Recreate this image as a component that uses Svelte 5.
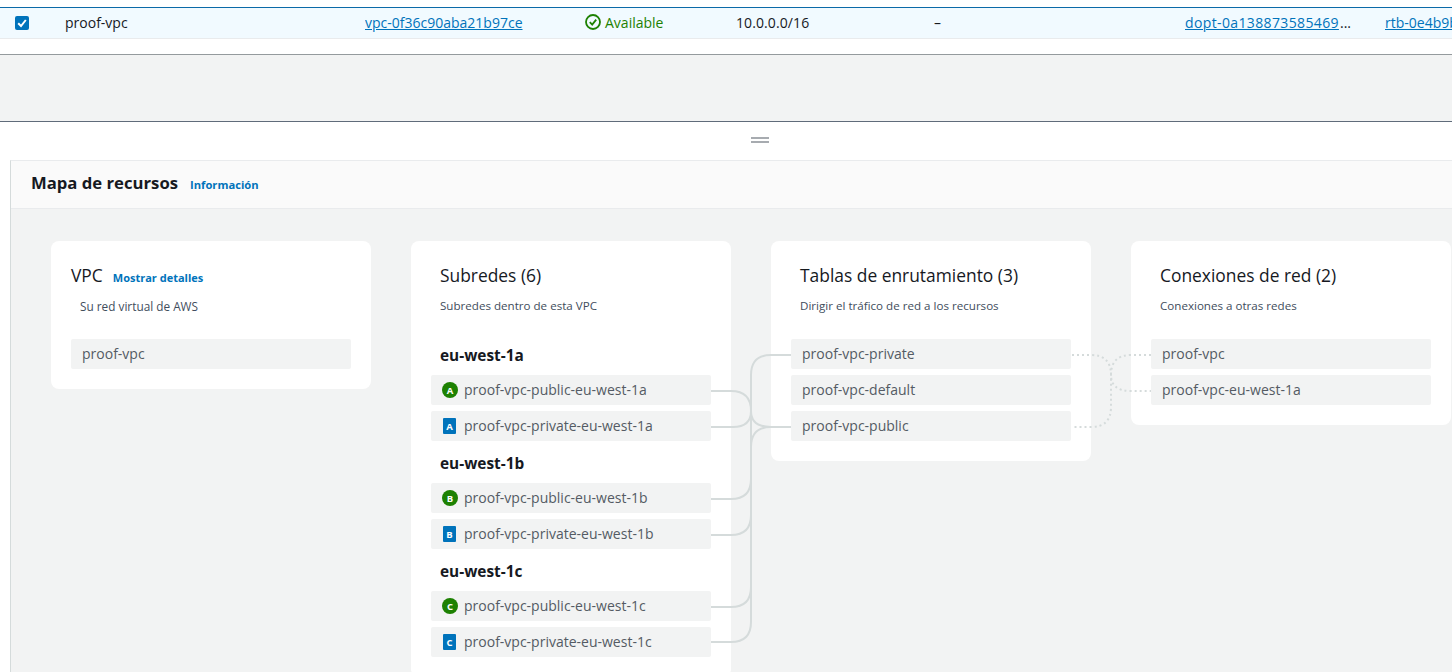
<script>
  const letters = ['a', 'b', 'c'];
  const regions = letters.map((l) => ({ name: `eu-west-1${l}`, letter: l.toUpperCase(), suffix: `eu-west-1${l}` }));
  const routes = ['proof-vpc-private', 'proof-vpc-default', 'proof-vpc-public'];
  const connections = ['proof-vpc', 'proof-vpc-eu-west-1a'];
</script>

<div class="page">
  <div class="top-gap"></div>
  <div class="row">
    <div class="cell check">
      <svg width="14" height="14" viewBox="0 0 14 14" aria-hidden="true">
        <rect width="14" height="14" rx="2" fill="#0073bb" />
        <path d="M3.2 7.2 6 10l4.8-6" fill="none" stroke="#fff" stroke-width="2" />
      </svg>
    </div>
    <div class="cell">proof-vpc</div>
    <div class="cell"><a href="#a">vpc-0f36c90aba21b97ce</a></div>
    <div class="cell status">
      <svg width="16" height="16" viewBox="0 0 16 16" aria-hidden="true">
        <circle cx="8" cy="8" r="7" fill="none" stroke="#1d8102" stroke-width="1.8" />
        <path d="M4.8 8.2 7.2 10.6 11.2 5.6" fill="none" stroke="#1d8102" stroke-width="1.8" />
      </svg>
      <span>Available</span>
    </div>
    <div class="cell cidr">10.0.0.0/16</div>
    <div class="cell dash">–</div>
    <div class="cell trunc"><a href="#b">dopt-0a138873585469</a><span>...</span></div>
    <div class="cell clip"><a href="#c">rtb-0e4b9bd27</a></div>
  </div>
  <div class="after-row"></div>
  <div class="band"></div>
  <div class="handle"><span></span></div>

  <section class="panel">
    <header class="panel-head">
      <h2>Mapa de recursos</h2>
      <a class="info" href="#i">Información</a>
    </header>
    <div class="map">
      <svg class="links" width="1441" height="463" viewBox="11 209 1441 463" aria-hidden="true">
        <g fill="none" stroke="#d5dbdb" stroke-width="2">
          <path d="M711 391H731Q751 391 751 411Q751 427 771 427H791" />
          <path d="M711 427H733Q751 427 751 411" />
          <path d="M791 355H771Q751 355 751 375V622Q751 642 731 642H711" />
          <path d="M791 427H771Q751 427 751 447" />
          <path d="M711 499H731Q751 499 751 479" />
          <path d="M711 535H731Q751 535 751 515" />
          <path d="M711 607H731Q751 607 751 587" />
        </g>
        <g fill="none" stroke="#d5dbdb" stroke-width="2" stroke-dasharray="2 3">
          <path d="M1072 355H1091Q1111 355 1111 375V407Q1111 427 1091 427H1072" />
          <path d="M1151 355H1131Q1111 355 1111 375Q1111 391 1131 391H1151" />
        </g>
      </svg>

      <div class="card">
        <div class="title-line vpc"><h3>VPC</h3><a class="info detail" href="#d">Mostrar detalles</a></div>
        <p class="sub wide">Su red virtual de AWS</p>
        <div class="items"><div class="item">proof-vpc</div></div>
      </div>

      <div class="card">
        <div class="title-line"><h3>Subredes (6)</h3></div>
        <p class="sub">Subredes dentro de esta VPC</p>
        <div class="items">
          {#each regions as r}
            <div class="region">{r.name}</div>
            <div class="item">
              <span class="badge round">{r.letter}</span>proof-vpc-public-{r.suffix}
            </div>
            <div class="item">
              <span class="badge square">{r.letter}</span>proof-vpc-private-{r.suffix}
            </div>
          {/each}
        </div>
      </div>

      <div class="card">
        <div class="title-line"><h3>Tablas de enrutamiento (3)</h3></div>
        <p class="sub">Dirigir el tráfico de red a los recursos</p>
        <div class="items">
          {#each routes as r}<div class="item">{r}</div>{/each}
        </div>
      </div>

      <div class="card">
        <div class="title-line"><h3>Conexiones de red (2)</h3></div>
        <p class="sub">Conexiones a otras redes</p>
        <div class="items">
          {#each connections as c}<div class="item">{c}</div>{/each}
        </div>
      </div>
    </div>
  </section>
</div>

<style>
  :global(body) {
    margin: 0;
    background: #fff;
    font-family: "Open Sans", "Noto Sans", sans-serif;
    color: #16191f;
  }
  .page {
    width: 1452px;
    height: 672px;
    overflow: hidden;
  }
  .top-gap {
    height: 7px;
  }
  .row {
    display: grid;
    grid-template-columns: 65px 300px 220px 151px 199px 250px 200px 67px;
    height: 30px;
    align-items: center;
    background: #f1faff;
    border-top: 1px solid #0a6aa8;
    border-bottom: 1px solid #e9ebed;
    font-size: 14px;
  }
  .cell {
    white-space: nowrap;
    overflow: hidden;
    display: flex;
    align-items: center;
    height: 20px;
    margin-top: -2px;
  }
  .check {
    padding-left: 15px;
    margin-top: 0;
  }
  a {
    color: #0073bb;
  }
  .status {
    gap: 4px;
    color: #1d8102;
  }
  .cidr {
    letter-spacing: 0.1px;
  }
  .dash {
    margin-left: -1px;
  }
  .trunc a {
    width: 155px;
    overflow: hidden;
    letter-spacing: 0.37px;
  }
  .after-row {
    height: 15px;
    border-bottom: 1px solid #949a9d;
  }
  .band {
    height: 66px;
    background: #f2f3f3;
    border-bottom: 1px solid #5f6b7a;
  }
  .handle {
    height: 38px;
    display: flex;
    align-items: center;
    justify-content: center;
    padding-left: 68px;
    box-sizing: border-box;
  }
  .handle span {
    display: block;
    width: 18px;
    height: 2px;
    margin-top: -2px;
    border-top: 2px solid #a7abb0;
    border-bottom: 2px solid #a7abb0;
  }
  .panel {
    margin-left: 10px;
    border-left: 1px solid #d5dbdb;
    border-top: 1px solid #e9ebed;
  }
  .panel-head {
    height: 47px;
    background: #fafafa;
    border-bottom: 1px solid #e9ebed;
    display: flex;
    align-items: center;
    gap: 12px;
    padding-left: 20px;
  }
  h2 {
    margin: -4px 0 0;
    font-size: 16.7px;
    font-weight: 700;
    color: #16191f;
  }
  .info {
    font-size: 11.2px;
    font-weight: 700;
    text-decoration: none;
    color: #0073bb;
  }
  .map {
    position: relative;
    display: flex;
    gap: 40px;
    align-items: flex-start;
    height: 463px;
    overflow: hidden;
    padding: 32px 0 0 40px;
    box-sizing: border-box;
    background: #f2f3f3;
  }
  .links {
    position: absolute;
    left: 0;
    top: 0;
    z-index: 1;
    pointer-events: none;
  }
  .card {
    flex: 0 0 320px;
    box-sizing: border-box;
    background: #fff;
    border-radius: 8px;
    padding: 23px 20px 20px;
  }
  .title-line {
    height: 22px;
    display: flex;
    align-items: center;
    gap: 10px;
    padding-left: 9px;
  }
  .title-line.vpc {
    padding-left: 0;
  }
  h3 {
    margin: 0;
    font-size: 17.4px;
    font-weight: 400;
    color: #16191f;
  }
  .detail {
    font-size: 11px;
    margin-top: 4px;
  }
  .sub {
    margin: 10px 0 0;
    height: 20px;
    line-height: 20px;
    font-size: 11.6px;
    color: #414d5c;
    padding-left: 9px;
  }
  .sub.wide {
    font-size: 11.8px;
  }
  .items {
    margin-top: 23px;
    display: flex;
    flex-direction: column;
    gap: 6px;
  }
  .item {
    height: 30px;
    box-sizing: border-box;
    display: flex;
    align-items: center;
    padding: 0 0 2px 11px;
    background: #f2f3f3;
    border-radius: 2px;
    font-size: 14px;
    color: #545b64;
  }
  .region {
    height: 30px;
    box-sizing: border-box;
    display: flex;
    align-items: center;
    padding: 2px 0 0 9px;
    font-size: 15.4px;
    font-weight: 700;
    color: #16191f;
  }
  .badge {
    flex: none;
    display: flex;
    align-items: center;
    justify-content: center;
    color: #fff;
    font-size: 9.5px;
    font-weight: 700;
    margin-top: 2px;
  }
  .round {
    width: 16px;
    height: 16px;
    margin-right: 6px;
    border-radius: 50%;
    background: #1d8102;
  }
  .square {
    margin-left: 1px;
    margin-right: 8px;
    width: 13px;
    height: 16px;
    border-radius: 1px;
    background: #0073bb;
  }
</style>
